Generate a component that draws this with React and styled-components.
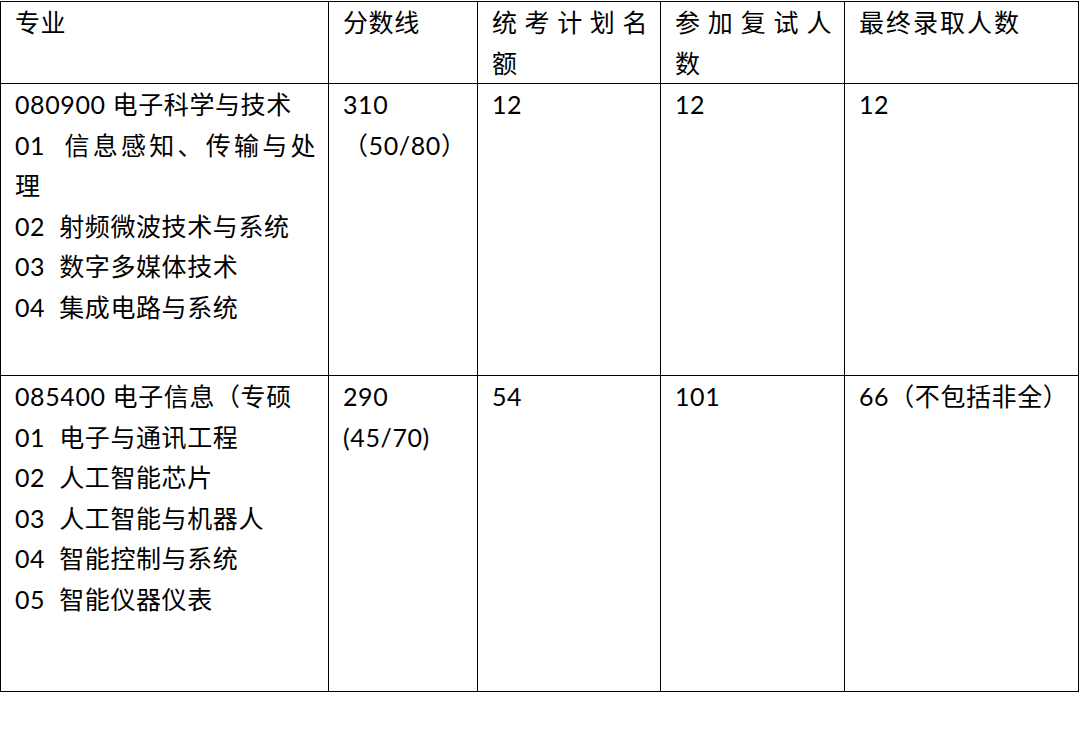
import React from "react";
import styled, { createGlobalStyle } from "styled-components";

const GlobalStyle = createGlobalStyle`
  html, body {
    margin: 0;
    padding: 0;
    background: #fff;
  }
  body {
    font-family: Lato, "Noto Sans CJK SC", sans-serif;
    color: #000;
  }
`;

const Table = styled.table`
  border-collapse: collapse;
  table-layout: fixed;
  width: 1078px;
  margin-top: 1px;
`;

const Row = styled.tr`
  height: ${(p) => p.$h}px;
`;

const Cell = styled.td`
  border: 1px solid #000;
  vertical-align: top;
  padding: 0 12px 0 14px;
  font-size: 25px;
  font-weight: 400;
  text-align: left;
  overflow: hidden;
`;

const Line = styled.div`
  height: 40.5px;
  line-height: 40.5px;
  white-space: pre-wrap;
  text-align: ${(p) => (p.$justify ? "justify" : "left")};
  text-align-last: ${(p) => (p.$justify ? "justify" : "auto")};
  letter-spacing: ${(p) => p.$ls ?? 0.6}px;
`;

const widths = [328, 149, 183, 184, 234];

const rows = [
  {
    h: 82,
    cells: [
      [{ t: "专业" }],
      [{ t: "分数线" }],
      [{ t: "统考计划名", j: true }, { t: "额" }],
      [{ t: "参加复试人", j: true }, { t: "数" }],
      [{ t: "最终录取人数", ls: 2 }],
    ],
  },
  {
    h: 292,
    cells: [
      [
        { t: "080900 电子科学与技术" },
        { t: "01  信息感知、传输与处", j: true },
        { t: "理" },
        { t: "02  射频微波技术与系统" },
        { t: "03  数字多媒体技术" },
        { t: "04  集成电路与系统" },
      ],
      [{ t: "310" }, { t: "（50/80）" }],
      [{ t: "12" }],
      [{ t: "12" }],
      [{ t: "12" }],
    ],
  },
  {
    h: 316,
    cells: [
      [
        { t: "085400 电子信息（专硕" },
        { t: "01  电子与通讯工程" },
        { t: "02  人工智能芯片" },
        { t: "03  人工智能与机器人" },
        { t: "04  智能控制与系统" },
        { t: "05  智能仪器仪表" },
      ],
      [{ t: "290" }, { t: "(45/70)" }],
      [{ t: "54" }],
      [{ t: "101" }],
      [{ t: "66（不包括非全）" }],
    ],
  },
];

export default function App() {
  return (
    <>
      <GlobalStyle />
      <Table>
        <colgroup>
          {widths.map((w, i) => (
            <col key={i} style={{ width: w }} />
          ))}
        </colgroup>
        <tbody>
          {rows.map((row, ri) => (
            <Row key={ri} $h={row.h}>
              {row.cells.map((lines, ci) => (
                <Cell key={ci} as={ri === 0 ? "th" : "td"}>
                  {lines.map((l, li) => (
                    <Line key={li} $justify={l.j} $ls={l.ls}>
                      {l.t}
                    </Line>
                  ))}
                </Cell>
              ))}
            </Row>
          ))}
        </tbody>
      </Table>
    </>
  );
}
